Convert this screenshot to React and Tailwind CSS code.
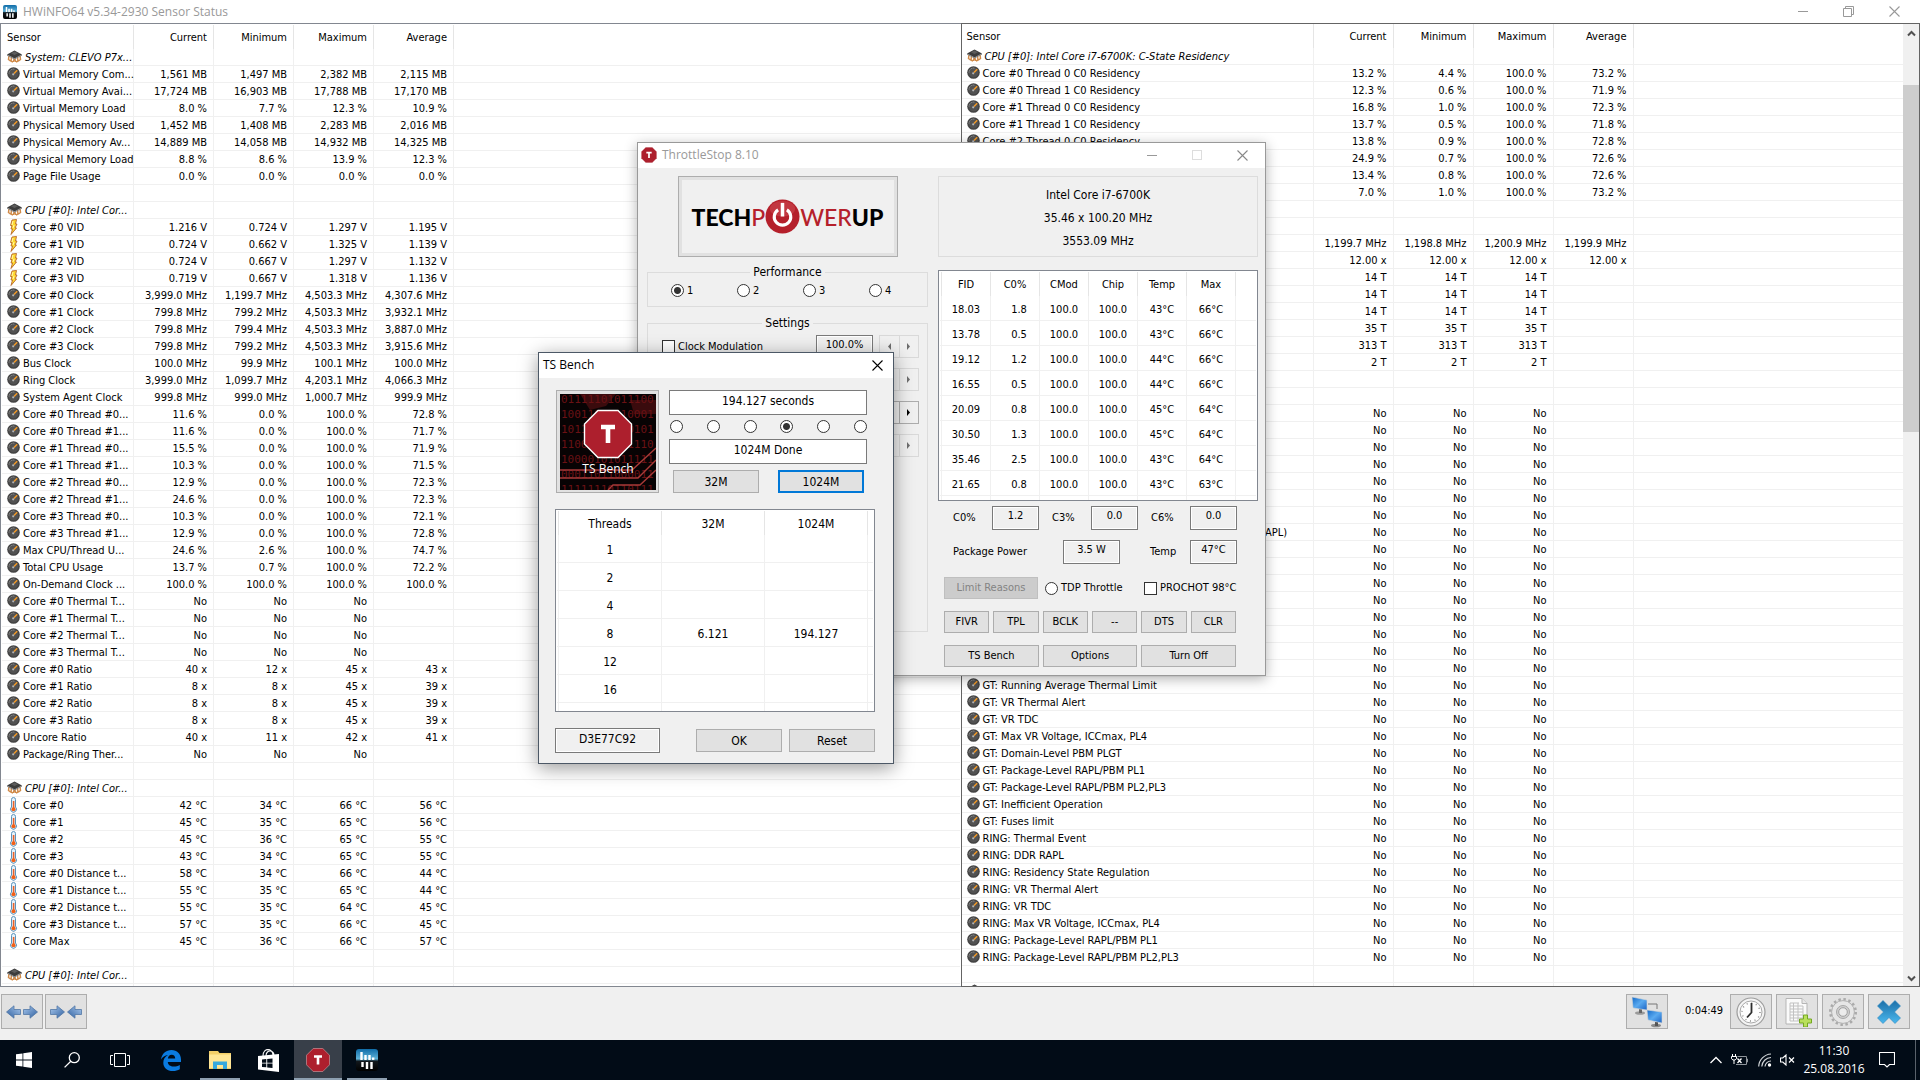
import { useState } from 'react';

const NO = ['No', 'No', 'No', ''];

// [icon, label, current, minimum, maximum, average]
const leftRows = [
  ['chip', 'System: CLEVO P7x...'],
  ['gauge', 'Virtual Memory Com...', '1,561 MB', '1,497 MB', '2,382 MB', '2,115 MB'],
  ['gauge', 'Virtual Memory Avai...', '17,724 MB', '16,903 MB', '17,788 MB', '17,170 MB'],
  ['gauge', 'Virtual Memory Load', '8.0 %', '7.7 %', '12.3 %', '10.9 %'],
  ['gauge', 'Physical Memory Used', '1,452 MB', '1,408 MB', '2,283 MB', '2,016 MB'],
  ['gauge', 'Physical Memory Av...', '14,889 MB', '14,058 MB', '14,932 MB', '14,325 MB'],
  ['gauge', 'Physical Memory Load', '8.8 %', '8.6 %', '13.9 %', '12.3 %'],
  ['gauge', 'Page File Usage', '0.0 %', '0.0 %', '0.0 %', '0.0 %'],
  [],
  ['chip', 'CPU [#0]: Intel Cor...'],
  ['bolt', 'Core #0 VID', '1.216 V', '0.724 V', '1.297 V', '1.195 V'],
  ['bolt', 'Core #1 VID', '0.724 V', '0.662 V', '1.325 V', '1.139 V'],
  ['bolt', 'Core #2 VID', '0.724 V', '0.667 V', '1.297 V', '1.132 V'],
  ['bolt', 'Core #3 VID', '0.719 V', '0.667 V', '1.318 V', '1.136 V'],
  ['gauge', 'Core #0 Clock', '3,999.0 MHz', '1,199.7 MHz', '4,503.3 MHz', '4,307.6 MHz'],
  ['gauge', 'Core #1 Clock', '799.8 MHz', '799.2 MHz', '4,503.3 MHz', '3,932.1 MHz'],
  ['gauge', 'Core #2 Clock', '799.8 MHz', '799.4 MHz', '4,503.3 MHz', '3,887.0 MHz'],
  ['gauge', 'Core #3 Clock', '799.8 MHz', '799.2 MHz', '4,503.3 MHz', '3,915.6 MHz'],
  ['gauge', 'Bus Clock', '100.0 MHz', '99.9 MHz', '100.1 MHz', '100.0 MHz'],
  ['gauge', 'Ring Clock', '3,999.0 MHz', '1,099.7 MHz', '4,203.1 MHz', '4,066.3 MHz'],
  ['gauge', 'System Agent Clock', '999.8 MHz', '999.0 MHz', '1,000.7 MHz', '999.9 MHz'],
  ['gauge', 'Core #0 Thread #0...', '11.6 %', '0.0 %', '100.0 %', '72.8 %'],
  ['gauge', 'Core #0 Thread #1...', '11.6 %', '0.0 %', '100.0 %', '71.7 %'],
  ['gauge', 'Core #1 Thread #0...', '15.5 %', '0.0 %', '100.0 %', '71.9 %'],
  ['gauge', 'Core #1 Thread #1...', '10.3 %', '0.0 %', '100.0 %', '71.5 %'],
  ['gauge', 'Core #2 Thread #0...', '12.9 %', '0.0 %', '100.0 %', '72.3 %'],
  ['gauge', 'Core #2 Thread #1...', '24.6 %', '0.0 %', '100.0 %', '72.3 %'],
  ['gauge', 'Core #3 Thread #0...', '10.3 %', '0.0 %', '100.0 %', '72.1 %'],
  ['gauge', 'Core #3 Thread #1...', '12.9 %', '0.0 %', '100.0 %', '72.8 %'],
  ['gauge', 'Max CPU/Thread U...', '24.6 %', '2.6 %', '100.0 %', '74.7 %'],
  ['gauge', 'Total CPU Usage', '13.7 %', '0.7 %', '100.0 %', '72.2 %'],
  ['gauge', 'On-Demand Clock ...', '100.0 %', '100.0 %', '100.0 %', '100.0 %'],
  ['gauge', 'Core #0 Thermal T...', ...NO],
  ['gauge', 'Core #1 Thermal T...', ...NO],
  ['gauge', 'Core #2 Thermal T...', ...NO],
  ['gauge', 'Core #3 Thermal T...', ...NO],
  ['gauge', 'Core #0 Ratio', '40 x', '12 x', '45 x', '43 x'],
  ['gauge', 'Core #1 Ratio', '8 x', '8 x', '45 x', '39 x'],
  ['gauge', 'Core #2 Ratio', '8 x', '8 x', '45 x', '39 x'],
  ['gauge', 'Core #3 Ratio', '8 x', '8 x', '45 x', '39 x'],
  ['gauge', 'Uncore Ratio', '40 x', '11 x', '42 x', '41 x'],
  ['gauge', 'Package/Ring Ther...', ...NO],
  [],
  ['chip', 'CPU [#0]: Intel Cor...'],
  ['temp', 'Core #0', '42 °C', '34 °C', '66 °C', '56 °C'],
  ['temp', 'Core #1', '45 °C', '35 °C', '65 °C', '56 °C'],
  ['temp', 'Core #2', '45 °C', '36 °C', '65 °C', '55 °C'],
  ['temp', 'Core #3', '43 °C', '34 °C', '65 °C', '55 °C'],
  ['temp', 'Core #0 Distance t...', '58 °C', '34 °C', '66 °C', '44 °C'],
  ['temp', 'Core #1 Distance t...', '55 °C', '35 °C', '65 °C', '44 °C'],
  ['temp', 'Core #2 Distance t...', '55 °C', '35 °C', '64 °C', '45 °C'],
  ['temp', 'Core #3 Distance t...', '57 °C', '35 °C', '66 °C', '45 °C'],
  ['temp', 'Core Max', '45 °C', '36 °C', '66 °C', '57 °C'],
  [],
  ['chip', 'CPU [#0]: Intel Cor...'],
  [],
];

const limitNames = [
  '', '', '', '', '', '', '',
  'IA: Electrical Design Point/Other(ICCmax,PL4,SVID,DDR RAPL)',
  '', '', '', '', '', '', '', '',
  'GT: Running Average Thermal Limit',
  'GT: VR Thermal Alert',
  'GT: VR TDC',
  'GT: Max VR Voltage, ICCmax, PL4',
  'GT: Domain-Level PBM PLGT',
  'GT: Package-Level RAPL/PBM PL1',
  'GT: Package-Level RAPL/PBM PL2,PL3',
  'GT: Inefficient Operation',
  'GT: Fuses limit',
  'RING: Thermal Event',
  'RING: DDR RAPL',
  'RING: Residency State Regulation',
  'RING: VR Thermal Alert',
  'RING: VR TDC',
  'RING: Max VR Voltage, ICCmax, PL4',
  'RING: Package-Level RAPL/PBM PL1',
  'RING: Package-Level RAPL/PBM PL2,PL3',
];

const rightRows = [
  ['chip', 'CPU [#0]: Intel Core i7-6700K: C-State Residency'],
  ['gauge', 'Core #0 Thread 0 C0 Residency', '13.2 %', '4.4 %', '100.0 %', '73.2 %'],
  ['gauge', 'Core #0 Thread 1 C0 Residency', '12.3 %', '0.6 %', '100.0 %', '71.9 %'],
  ['gauge', 'Core #1 Thread 0 C0 Residency', '16.8 %', '1.0 %', '100.0 %', '72.3 %'],
  ['gauge', 'Core #1 Thread 1 C0 Residency', '13.7 %', '0.5 %', '100.0 %', '71.8 %'],
  ['gauge', 'Core #2 Thread 0 C0 Residency', '13.8 %', '0.9 %', '100.0 %', '72.8 %'],
  ['', '', '24.9 %', '0.7 %', '100.0 %', '72.6 %'],
  ['', '', '13.4 %', '0.8 %', '100.0 %', '72.6 %'],
  ['', '', '7.0 %', '1.0 %', '100.0 %', '73.2 %'],
  [],
  [],
  ['', '', '1,199.7 MHz', '1,198.8 MHz', '1,200.9 MHz', '1,199.9 MHz'],
  ['', '', '12.00 x', '12.00 x', '12.00 x', '12.00 x'],
  ['', '', '14 T', '14 T', '14 T'],
  ['', '', '14 T', '14 T', '14 T'],
  ['', '', '14 T', '14 T', '14 T'],
  ['', '', '35 T', '35 T', '35 T'],
  ['', '', '313 T', '313 T', '313 T'],
  ['', '', '2 T', '2 T', '2 T'],
  [],
  [],
  ...limitNames.map((name) => [name ? 'gauge' : '', name, ...NO]),
  [],
  ['chip', ''],
];

const threadRows = [
  ['18.03', '1.8', '100.0', '100.0', '43°C', '66°C'],
  ['13.78', '0.5', '100.0', '100.0', '43°C', '66°C'],
  ['19.12', '1.2', '100.0', '100.0', '44°C', '66°C'],
  ['16.55', '0.5', '100.0', '100.0', '44°C', '66°C'],
  ['20.09', '0.8', '100.0', '100.0', '45°C', '64°C'],
  ['30.50', '1.3', '100.0', '100.0', '45°C', '64°C'],
  ['35.46', '2.5', '100.0', '100.0', '43°C', '64°C'],
  ['21.65', '0.8', '100.0', '100.0', '43°C', '63°C'],
];

const benchRows = [
  ['1', '', ''],
  ['2', '', ''],
  ['4', '', ''],
  ['8', '6.121', '194.127'],
  ['12', '', ''],
  ['16', '', ''],
];

const button = 'border border-[#adadad] bg-[#e1e1e1] text-center whitespace-nowrap';
const radio =
  'm-0 size-[13px] shrink-0 appearance-none rounded-full border border-[#333] bg-white checked:bg-[radial-gradient(circle,#333_3px,#fff_4px)]';
const checkbox = 'm-0 size-[13px] shrink-0 appearance-none border border-[#333] bg-white checked:bg-[#333]';

/* ---------- icons ---------- */

const GaugeIcon = () => (
  <svg viewBox="0 0 13 13" className="mt-px size-[13px] shrink-0">
    <circle cx="6.5" cy="6.5" r="6.3" fill="#444" />
    <circle cx="6.5" cy="6.5" r="4.8" fill="#525252" />
    <path d="M2 6.5A4.5 4.5 0 0 1 8 2.3" stroke="#a5a5a5" strokeWidth="1" strokeDasharray="1 1" fill="none" />
    <path d="M7 6.5L10.2 3.2" stroke="#f39a26" strokeWidth="1.5" />
    <circle cx="6.2" cy="7.3" r="1.1" fill="#b4b4b4" />
  </svg>
);

const ChipIcon = () => (
  <svg viewBox="0 0 15 13" className="mt-px h-[13px] w-[15px] shrink-0">
    <path
      d="M2 6l-.5 3.500L3.500 11M4.500 7L4 11l2 1M7 9l-.5 3M8 9l.5 3M10.500 7l.5 4-2 1M13 6l.5 3.500L11.500 11"
      stroke="#d08a48"
      strokeWidth="1.5"
      fill="none"
    />
    <path d="M7.5 .5L15 4.500 7.500 8.500 0 4.500z" fill="#3c3c3c" />
    <path d="M0 4.500L7.500 8.500 15 4.500v1L7.500 9.500 0 5.500z" fill="#777" />
    <path d="M7.5 1.5L11 3.300 7.500 5 4 3.300z" fill="#5c5c5c" />
  </svg>
);

const BoltIcon = () => (
  <svg viewBox="0 0 13 16" className="h-4 w-[13px] shrink-0">
    <path d="M5 1L9.5 .5 8.5 5H10L8 9h1.5L4 15.5 5.5 10H4L5 6.5H3.5z" fill="#ffd92e" stroke="#b4642a" strokeWidth=".9" />
    <path d="M6 2L5 6M7 6L6 9" stroke="#fff6b0" strokeWidth="1" />
  </svg>
);

const TempIcon = () => (
  <svg viewBox="0 0 13 16" className="h-4 w-[13px] shrink-0">
    <path d="M4.5 2.5a2 2 0 0 1 4 0V10a3 3 0 1 1-4 0z" fill="#e4f1fa" stroke="#5b93bb" strokeWidth="1" />
    <rect x="5.8" y="4" width="1.6" height="8" fill="#e8622a" />
    <circle cx="6.5" cy="12.3" r="2" fill="#f06018" />
  </svg>
);

const rowIcons = { gauge: GaugeIcon, chip: ChipIcon, bolt: BoltIcon, temp: TempIcon };

const HwinfoIcon = ({ className }) => (
  <svg viewBox="0 0 22 22" className={className}>
    <defs>
      <linearGradient id="hw" x1="0" y1="0" x2="0" y2="1">
        <stop offset="0" stopColor="#0f6ca8" />
        <stop offset=".45" stopColor="#5fb2d8" />
        <stop offset=".55" stopColor="#12181d" />
        <stop offset="1" stopColor="#000" />
      </linearGradient>
    </defs>
    <rect width="22" height="22" rx="3" fill="url(#hw)" />
    <path d="M5.500 3v8M9.500 6v5M13.500 6v5" stroke="#fff" strokeWidth="2.4" />
    <rect x="16" y="8.5" width="2.4" height="2.4" fill="#fff" />
    <path d="M6.5 13v5M11 13v7M15.5 13v7" stroke="#fff" strokeWidth="2.4" />
  </svg>
);

const StopIcon = ({ className }) => (
  <svg viewBox="0 0 24 24" className={className}>
    <path d="M7.2 .5h9.6l6.7 6.7v9.6l-6.7 6.7H7.2L.5 16.8V7.2z" fill="#ad1f2d" stroke="#d9a3a8" strokeWidth=".6" />
    <path d="M8 8.500h8M12 8.500V16.500" stroke="#fff" strokeWidth="2.600" />
  </svg>
);

const CloseGlyph = ({ className }) => (
  <svg viewBox="0 0 11 11" className={`size-[11px] ${className}`}>
    <path d="M.5 .5l10 10M10.5 .5l-10 10" stroke="currentColor" strokeWidth="1.1" />
  </svg>
);

const BlueArrow = ({ flip }) => (
  <svg viewBox="0 0 15 14" className={flip ? 'h-[14px] w-[15px] -scale-x-100' : 'h-[14px] w-[15px]'}>
    <defs>
      <linearGradient id="arrow" x1="0" y1="0" x2="1" y2="1">
        <stop offset="0" stopColor="#a9c9ee" />
        <stop offset="1" stopColor="#2f5f9f" />
      </linearGradient>
    </defs>
    <path d="M.5 4.5H7V.8L14.5 7 7 13.2V9.5H.5z" fill="url(#arrow)" stroke="#5277a6" strokeWidth=".8" />
  </svg>
);

const NetworkIcon = () => (
  <svg viewBox="0 0 32 32" className="size-8">
    <defs>
      <linearGradient id="screen" x1="0" y1="0" x2="1" y2="1">
        <stop offset="0" stopColor="#1469c7" />
        <stop offset=".5" stopColor="#5aaaf0" />
        <stop offset="1" stopColor="#1b63c4" />
      </linearGradient>
    </defs>
    <path d="M17 8h9v5" stroke="#777" fill="none" />
    <ellipse cx="9" cy="17" rx="5" ry="1.8" fill="#9a9a9a" />
    <path d="M8 13h3v4H8z" fill="#666" />
    <path d="M1 1l15 3v10L2 12z" fill="url(#screen)" stroke="#d5d5d5" strokeWidth=".6" />
    <ellipse cx="25" cy="29.5" rx="5" ry="1.8" fill="#8a8a8a" />
    <path d="M24 26h3v4h-3z" fill="#555" />
    <path d="M16 14l15 2v11l-14-3z" fill="url(#screen)" stroke="#d5d5d5" strokeWidth=".6" />
  </svg>
);

const ClockIcon = () => (
  <svg viewBox="0 0 30 30" className="size-[30px]">
    <circle cx="15" cy="15" r="14" fill="#f4f4f4" stroke="#9d9d9d" strokeWidth="1.2" />
    <circle cx="15" cy="15" r="11" fill="#fdfdfd" stroke="#a8a8a8" strokeWidth="1" />
    <circle cx="15" cy="15" r="9" fill="none" stroke="#888" strokeWidth="1.4" strokeDasharray="1 3.71" />
    <path d="M15.5 6v9.5L11 20.5" stroke="#2d2d2d" strokeWidth="1.8" fill="none" />
  </svg>
);

const ReportIcon = () => (
  <svg viewBox="0 0 30 30" className="size-[30px]">
    <path d="M4 1.5h16l5 5V27H4z" fill="#fafafa" stroke="#b5b5b5" />
    <path d="M20 1.5v5h5" fill="#e8e8e8" stroke="#b5b5b5" />
    <path d="M8 6h9M8 9h13M8 12h13M8 15h13M8 18h13M8 21h13M8 6v18M11.5 6v18M16 6v18M21 9v15M8 24h13" stroke="#c2c2c2" fill="none" />
    <path d="M21.5 18h4v4h4v4h-4v4h-4v-4h-4v-4h4z" fill="#b9e05c" stroke="#74a823" />
  </svg>
);

const GearIcon = () => (
  <svg viewBox="0 0 30 30" className="size-[30px]">
    <circle cx="15" cy="15" r="12.4" fill="none" stroke="#aaa" strokeWidth="3.2" strokeDasharray="2.4 2.47" />
    <circle cx="15" cy="15" r="11.4" fill="#e6e6e6" stroke="#b2b2b2" />
    <circle cx="15" cy="15" r="6.5" fill="#cfcfcf" stroke="#a9a9a9" />
    <circle cx="15" cy="15" r="4.3" fill="#ececec" stroke="#a0a0a0" />
  </svg>
);

const BigCrossIcon = () => (
  <svg viewBox="0 0 26 26" className="size-[26px]">
    <defs>
      <linearGradient id="cross" x1="0" y1="0" x2="0" y2="1">
        <stop offset="0" stopColor="#1c6fa8" />
        <stop offset="1" stopColor="#4bb8ee" />
      </linearGradient>
    </defs>
    <path
      d="M7 1.5L13 7.5l6-6L24.5 7l-6 6 6 6-5.5 5.5-6-6-6 6L1.5 19l6-6-6-6z"
      fill="url(#cross)"
      stroke="#2a86c0"
      strokeWidth=".6"
    />
  </svg>
);

/* ---------- sensor window ---------- */

const SensorTable = ({ rows, firstCol, label }) => (
  <table aria-label={label} className="w-full table-fixed border-separate border-spacing-0 whitespace-nowrap">
    <colgroup>
      <col className={firstCol} />
      <col className="w-[80px]" />
      <col className="w-[80px]" />
      <col className="w-[80px]" />
      <col className="w-[80px]" />
      <col />
    </colgroup>
    <thead>
      <tr className="h-6">
        <th className="border-r border-[#e5e5e5] p-0 pt-[2px] pl-[5px] text-left font-normal">Sensor</th>
        {['Current', 'Minimum', 'Maximum', 'Average'].map((name) => (
          <th key={name} className="border-r border-[#e5e5e5] p-0 pt-[2px] pr-[6px] text-right font-normal">
            {name}
          </th>
        ))}
        <th className="p-0" />
      </tr>
    </thead>
    <tbody>
      {rows.map(([icon, name, ...values], i) => {
        const Icon = rowIcons[icon];
        return (
          <tr key={i} className="h-[17px]">
            <td className="border-r border-b border-[#f0f0f0] p-0">
              <div className={`flex h-4 gap-[3px] pl-[5px] leading-[18px] ${icon === 'chip' ? 'italic' : ''}`}>
                {Icon && <Icon />}
                <span>{name}</span>
              </div>
            </td>
            {[0, 1, 2, 3].map((c) => (
              <td key={c} className="border-r border-b border-[#f0f0f0] p-0 pr-[6px] text-right">
                <div className="h-4 leading-[18px]">{values[c]}</div>
              </td>
            ))}
            <td className="border-b border-[#f0f0f0] p-0" />
          </tr>
        );
      })}
    </tbody>
  </table>
);

const toolButton = 'flex h-[35px] w-[42px] items-center justify-center border border-[#adadad] bg-[#e1e1e1]';

const SensorWindow = () => (
  <main className="flex min-h-0 flex-1 flex-col">
    <header className="flex h-[23px] shrink-0 items-center pl-[3px] font-['Open_Sans',sans-serif] text-xs text-[#999]">
      <HwinfoIcon className="size-[14px]" />
      <h1 className="pl-[6px]">HWiNFO64 v5.34-2930 Sensor Status</h1>
      <div className="ml-auto flex items-center gap-[35px] pr-5">
        <button aria-label="Minimize" className="h-px w-[10px] bg-[#999]" />
        <button aria-label="Restore">
          <svg viewBox="0 0 11 11" className="size-[11px]">
            <path d="M.5 2.5h8v8h-8zM2.5 2.5v-2h8v8h-2" fill="none" stroke="#999" />
          </svg>
        </button>
        <button aria-label="Close">
          <CloseGlyph className="text-[#999]" />
        </button>
      </div>
    </header>
    <div className="flex min-h-0 flex-1">
      <section className="min-w-0 flex-1 overflow-hidden border border-[#828790] p-px pb-0">
        <SensorTable rows={leftRows} firstCol="w-[132px]" label="System and CPU sensors" />
      </section>
      <section className="-ml-px flex min-w-0 flex-1 overflow-hidden border border-[#646464]">
        <div className="min-w-0 flex-1">
          <SensorTable rows={rightRows} firstCol="w-[352px]" label="C-state and limit sensors" />
        </div>
        <div className="flex w-4 flex-col items-center bg-[#f0f0f0] pt-[6px] pb-1">
          <svg viewBox="0 0 9 7" className="h-[7px] w-[9px]">
            <path d="M1 5.5L4.5 2 8 5.5" fill="none" stroke="#505050" strokeWidth="2" />
          </svg>
          <div className="mt-12 h-[347px] w-full bg-[#cdcdcd]" />
          <svg viewBox="0 0 9 7" className="mt-auto h-[7px] w-[9px]">
            <path d="M1 1.5L4.5 5 8 1.5" fill="none" stroke="#505050" strokeWidth="2" />
          </svg>
        </div>
      </section>
    </div>
    <footer className="flex h-[53px] shrink-0 items-start gap-1 bg-[#f0f0f0] pt-[7px] pr-[10px] pl-px">
      <div className="flex gap-[2px]">
        <button aria-label="Expand columns" className={`${toolButton} gap-[2px]`}>
          <BlueArrow flip />
          <BlueArrow />
        </button>
        <button aria-label="Shrink columns" className={`${toolButton} gap-[2px]`}>
          <BlueArrow />
          <BlueArrow flip />
        </button>
      </div>
      <button aria-label="Network" className={`${toolButton} ml-auto`}>
        <NetworkIcon />
      </button>
      <span className="w-[54px] pt-[9px] pl-[13px] leading-4 whitespace-nowrap">0:04:49</span>
      <button aria-label="Reset clock" className={toolButton}>
        <ClockIcon />
      </button>
      <button aria-label="Log to file" className={toolButton}>
        <ReportIcon />
      </button>
      <button aria-label="Settings" className={toolButton}>
        <GearIcon />
      </button>
      <button aria-label="Close sensors" className={toolButton}>
        <BigCrossIcon />
      </button>
    </footer>
  </main>
);

/* ---------- ThrottleStop window ---------- */

const Readout = ({ className, children }) => (
  <output className={`block border border-[#7a7a7a] pb-1 text-center shadow-[inset_0_0_0_1px_#fff] ${className}`}>
    {children}
  </output>
);

const Spinner = ({ dark }) => (
  <div className={`ml-[6px] flex h-[23px] w-10 border ${dark ? 'border-[#adadad]' : 'border-[#d9d9d9]'}`}>
    {['M4 0L1 3.5 4 7z', 'M1 0l3 3.5L1 7z'].map((d, i) => (
      <button
        key={d}
        aria-label={i ? 'Increase' : 'Decrease'}
        className={`flex flex-1 items-center justify-center ${i ? 'border-l border-inherit' : ''}`}
      >
        <svg viewBox="0 0 5 7" className="h-[7px] w-[5px]">
          <path d={d} fill={dark ? '#000' : '#6d6d6d'} />
        </svg>
      </button>
    ))}
  </div>
);

const PowerLogo = () => (
  <svg viewBox="0 0 36 36" className="size-[35px]">
    <circle cx="18" cy="18" r="17.5" fill="#b5202b" />
    <ellipse cx="18" cy="10" rx="13" ry="8" fill="#c8434b" opacity=".7" />
    <path d="M13.5 11.2a8.5 8.5 0 1 0 9 0" fill="none" stroke="#fff" strokeWidth="3.2" />
    <path d="M18 4v14" stroke="#fff" strokeWidth="3.6" />
  </svg>
);

const ThrottleStop = () => {
  const [profile, setProfile] = useState('1');

  return (
    <section className="absolute top-[142px] left-[637px] flex h-[534px] w-[629px] flex-col border border-[#999] bg-[#f0f0f0] shadow-[0_3px_12px_rgba(0,0,0,0.3)]">
      <header className="flex h-[25px] shrink-0 items-center bg-white pb-px pl-[3px] font-['Open_Sans',sans-serif] text-xs text-[#999]">
        <StopIcon className="size-4" />
        <h2 className="pl-[5px]">ThrottleStop 8.10</h2>
        <div className="ml-auto flex items-center gap-[35px] pr-[17px]">
          <button aria-label="Minimize" className="h-px w-[10px] bg-[#999]" />
          <button aria-label="Maximize" disabled className="size-[10px] border border-[#ddd]" />
          <button aria-label="Close">
            <CloseGlyph className="text-[#888]" />
          </button>
        </div>
      </header>

      <div className="flex flex-1 gap-[10px] pt-2 pr-[7px] pl-[9px]">
        <div className="w-[281px] shrink-0">
          <button
            aria-label="TechPowerUp"
            className="mx-auto flex h-[81px] w-[220px] items-center justify-center border border-[#adadad] font-['Lato',sans-serif] text-[23px] font-black text-black shadow-[inset_0_0_0_3px_#e1e1e1]"
          >
            TECH<span className="font-medium text-[#b5202b]">P</span>
            <PowerLogo />
            <span className="font-medium text-[#b5202b]">WER</span>UP
          </button>

          <fieldset className="mt-[7px] h-[43px] min-w-0 border border-[#dcdcdc]">
            <legend className="mx-auto px-[3px] text-xs leading-4">Performance</legend>
            <div className="flex gap-[41px] pt-1 pl-[23px]">
              {['1', '2', '3', '4'].map((n) => (
                <label key={n} className="flex w-[25px] items-center gap-[3px] leading-[13px]">
                  <input
                    type="radio"
                    name="profile"
                    className={radio}
                    checked={profile === n}
                    onChange={() => setProfile(n)}
                  />
                  {n}
                </label>
              ))}
            </div>
          </fieldset>

          <fieldset className="mt-2 h-[317px] min-w-0 border border-[#dcdcdc]">
            <legend className="mx-auto px-[3px] text-xs leading-4">Settings</legend>
            <div className="flex flex-col gap-[10px] pt-1 pr-[8px] pl-[14px]">
              <div className="flex h-[23px] items-center">
                <label className="flex items-center gap-[3px]">
                  <input type="checkbox" className={checkbox} />
                  Clock Modulation
                </label>
                <Readout className="ml-auto h-6 w-[57px] leading-[18px]">100.0%</Readout>
                <Spinner />
              </div>
              <div className="flex justify-end">
                <Spinner />
              </div>
              <div className="flex justify-end">
                <Spinner dark />
              </div>
              <div className="flex justify-end">
                <Spinner />
              </div>
            </div>
          </fieldset>
        </div>

        <div className="min-w-0 flex-1">
          <div className="flex h-[81px] flex-col items-center justify-center border border-[#dcdcdc] pt-[3px] text-xs leading-[23px]">
            <p>Intel Core i7-6700K</p>
            <p>35.46 x 100.20 MHz</p>
            <p>3553.09 MHz</p>
          </div>

          <div className="mt-[13px] h-[231px] overflow-hidden border border-[#828790] bg-white px-px pt-px">
            <table aria-label="Threads" className="w-full table-fixed border-separate border-spacing-0 text-center">
              <colgroup>
                <col className="w-[2px]" />
                {threadRows[0].map((_, i) => (
                  <col key={i} className="w-[49px]" />
                ))}
                <col />
              </colgroup>
              <thead>
                <tr className="h-6">
                  <th className="border-r border-[#e5e5e5] p-0" />
                  {['FID', 'C0%', 'CMod', 'Chip', 'Temp', 'Max'].map((name) => (
                    <th key={name} className="border-r border-[#e5e5e5] p-0 pt-[2px] font-normal">
                      {name}
                    </th>
                  ))}
                  <th className="p-0" />
                </tr>
              </thead>
              <tbody>
                {[...threadRows, ['', '', '', '', '', '']].map((cells, i) => (
                  <tr key={i} className="h-[25px]">
                    <td className="border-r border-b border-[#f0f0f0] p-0" />
                    {cells.map((cell, c) => (
                      <td key={c} className={`border-r border-b border-[#f0f0f0] p-0 pt-[3px] ${c === 1 ? 'pl-2' : ''}`}>
                        {cell}
                      </td>
                    ))}
                    <td className="border-b border-[#f0f0f0] p-0" />
                  </tr>
                ))}
              </tbody>
            </table>
          </div>

          <div className="mt-[5px] flex gap-[13px] pl-[15px] leading-[18px]">
            {[['C0%', '1.2'], ['C3%', '0.0'], ['C6%', '0.0']].map(([name, value]) => (
              <div key={name} className="flex items-center">
                <span className="w-[39px]">{name}</span>
                <Readout className="h-6 w-[47px]">{value}</Readout>
              </div>
            ))}
          </div>
          <div className="mt-[10px] flex items-center pl-[15px] leading-[18px]">
            <span className="w-[110px]">Package Power</span>
            <Readout className="h-6 w-[57px]">3.5 W</Readout>
            <span className="ml-[30px] w-10">Temp</span>
            <Readout className="h-6 w-[47px]">47°C</Readout>
          </div>

          <div className="mt-[13px] flex items-center pl-[6px] whitespace-nowrap">
            <button disabled className="h-[22px] w-[94px] border border-[#bfbfbf] bg-[#ccc] text-[#838383]">
              Limit Reasons
            </button>
            <label className="ml-[7px] flex w-[99px] items-center gap-[3px]">
              <input type="radio" name="tdp" className={radio} />
              TDP Throttle
            </label>
            <label className="flex items-center gap-[3px]">
              <input type="checkbox" className={checkbox} />
              PROCHOT 98°C
            </label>
          </div>

          <div className="mt-3 grid w-[298px] grid-cols-6 gap-x-[4px] gap-y-3 pl-[6px]">
            {['FIVR', 'TPL', 'BCLK', '--', 'DTS', 'CLR'].map((name) => (
              <button key={name} className={`${button} h-[22px]`}>
                {name}
              </button>
            ))}
            {['TS Bench', 'Options', 'Turn Off'].map((name) => (
              <button key={name} className={`${button} col-span-2 h-[22px]`}>
                {name}
              </button>
            ))}
          </div>
        </div>
      </div>
    </section>
  );
};

/* ---------- TS Bench dialog ---------- */

const bits = ['01111101011100', '10011001110001', '10111001010101', '11001101011110', '10000101011111', '00011011000011', '11111110110111'];

const BenchPicture = () => (
  <svg viewBox="0 0 96 96" className="size-24">
    <rect width="96" height="96" fill="#080304" />
    <path d="M20 0h36L46 12 30 16zM70 6h26v14H74z" fill="#3a0b0d" />
    {bits.map((line, i) => (
      <text key={i} x="1" y={9 + i * 15} fontFamily="DejaVu Sans Mono, monospace" fontSize="11" fill="#6a1114">
        {line}
      </text>
    ))}
    <path d="M0 76h72l24-22M0 84h78l18-18M48 96l5-5h27l16-15" fill="none" stroke="#a83a38" strokeWidth="1.4" />
    <path d="M38 16.5h20L71.500 30v20L58 63.500H38L24.500 50V30z" fill="#ad1f2d" stroke="#fff" strokeWidth="1.4" />
    <path d="M41 33h14M48 33v16" stroke="#fff" strokeWidth="4.6" />
    <text x="48" y="79" textAnchor="middle" fontFamily="Open Sans, sans-serif" fontSize="12" fill="#fff">
      TS Bench
    </text>
  </svg>
);

const TSBench = () => {
  const [step, setStep] = useState(3);

  return (
    <section
      role="dialog"
      aria-label="TS Bench"
      className="absolute top-[352px] left-[538px] flex h-[412px] w-[356px] flex-col border border-[#4c5866] bg-[#f0f0f0] text-xs shadow-[0_4px_18px_rgba(0,0,0,0.4)]"
    >
      <header className="flex h-[25px] shrink-0 items-center justify-between bg-white pr-[10px] pb-px pl-1 font-['Open_Sans',sans-serif]">
        <h2>TS Bench</h2>
        <button aria-label="Close">
          <CloseGlyph className="text-black" />
        </button>
      </header>

      <div className="flex flex-1 flex-col pt-3 pr-[18px] pl-4">
        <div className="flex gap-[10px] pl-px">
          <button aria-label="Bench picture" className="size-[103px] shrink-0 border border-[#adadad] bg-[#e1e1e1] p-[3px]">
            <BenchPicture />
          </button>
          <div className="flex w-[198px] flex-col">
            <Readout className="h-[25px] bg-white leading-5">194.127 seconds</Readout>
            <div className="flex justify-between pt-[5px] pb-[6px] pl-px">
              {[0, 1, 2, 3, 4, 5].map((n) => (
                <input
                  key={n}
                  type="radio"
                  name="step"
                  aria-label={`Step ${n + 1}`}
                  className={radio}
                  checked={step === n}
                  onChange={() => setStep(n)}
                />
              ))}
            </div>
            <Readout className="h-[25px] bg-white leading-5">1024M Done</Readout>
            <div className="flex justify-between pt-[6px] pr-[3px] pl-1">
              <button className={`${button} h-[23px] w-[86px]`}>32M</button>
              <button className="h-[23px] w-[86px] border-2 border-[#0078d7] bg-[#e1e1e1]">1024M</button>
            </div>
          </div>
        </div>

        <div className="mt-4 h-[203px] overflow-hidden border border-[#828790] bg-white px-px pt-px">
          <table aria-label="Bench results" className="w-full table-fixed border-separate border-spacing-0 text-center">
            <colgroup>
              <col className="w-[2px]" />
              <col className="w-[103px]" />
              <col className="w-[103px]" />
              <col className="w-[103px]" />
              <col />
            </colgroup>
            <thead>
              <tr className="h-6">
                <th className="border-r border-[#e5e5e5] p-0" />
                {['Threads', '32M', '1024M'].map((name) => (
                  <th key={name} className="border-r border-[#e5e5e5] p-0 pt-[2px] font-normal">
                    {name}
                  </th>
                ))}
                <th className="p-0" />
              </tr>
            </thead>
            <tbody>
              {[...benchRows, ['', '', '']].map((cells, i) => (
                <tr key={i} className="h-7">
                  <td className="border-r border-b border-[#f0f0f0] p-0" />
                  {cells.map((cell, c) => (
                    <td key={c} className="border-r border-b border-[#f0f0f0] p-0 pt-[3px]">
                      {cell}
                    </td>
                  ))}
                  <td className="border-b border-[#f0f0f0] p-0" />
                </tr>
              ))}
            </tbody>
          </table>
        </div>

        <div className="mt-4 flex items-center">
          <Readout className="h-[25px] w-[105px] leading-5">D3E77C92</Readout>
          <button className={`${button} ml-auto h-[23px] w-[86px]`}>OK</button>
          <button className={`${button} ml-[7px] h-[23px] w-[86px]`}>Reset</button>
        </div>
      </div>
    </section>
  );
};

/* ---------- taskbar ---------- */

const Taskbar = () => (
  <nav className="flex h-10 shrink-0 items-stretch bg-[#020c17] text-white">
    <button aria-label="Start" className="flex w-12 items-center justify-center">
      <svg viewBox="0 0 16 16" className="size-4">
        <path d="M0 2.300L6.500 1.400v6.200H0zM7.300 1.300L16 0v7.600H7.300zM0 8.400h6.500v6.200L0 13.700zM7.300 8.400H16V16l-8.700-1.300z" fill="#fff" />
      </svg>
    </button>
    <button aria-label="Search" className="flex w-12 items-center justify-center">
      <svg viewBox="0 0 16 16" className="size-4">
        <circle cx="10.300" cy="5.700" r="5" fill="none" stroke="#fff" strokeWidth="1.300" />
        <path d="M6.800 9.200L.6 15.400" stroke="#fff" strokeWidth="1.300" />
      </svg>
    </button>
    <button aria-label="Task view" className="flex w-12 items-center justify-center">
      <svg viewBox="0 0 20 14" className="h-[14px] w-5">
        <path d="M4.500 .5h11v13h-11zM3 2.500H.5v9H3M17 2.500h2.500v9H17" fill="none" stroke="#fff" />
      </svg>
    </button>
    <button aria-label="Edge" className="ml-[3px] flex w-[48px] items-center justify-center">
      <svg viewBox="0 0 20 21" className="h-[21px] w-5">
        <path
          d="M0 9.500C1 3.500 5 0 10.500 0 16 0 20 4 20 9.500v2.600H6.800c.2 3 2.700 4.500 5.700 4.500 2.400 0 4.400-.6 6.300-1.700v4.300C16.800 20.400 14.500 21 12 21 6 21 2.300 17.500 2.300 12.700c0-3.300 1.600-6 4.700-7.700C3.800 5.400 1.500 7 0 9.500zM6.900 8.600h7.300c0-2.300-1.300-3.800-3.500-3.800S7.200 6.200 6.900 8.600z"
          fill="#0a7be0"
        />
      </svg>
    </button>
    <button aria-label="File Explorer" className="ml-[5px] flex w-10 items-center justify-center border-b-2 border-[#8ea0b1] pt-[2px]">
      <svg viewBox="0 0 22 18" className="h-[18px] w-[22px]">
        <path d="M0 0h9l1.500 2H22v16H0z" fill="#f3cf68" />
        <path d="M0 3.500h22V17H0z" fill="#ffe695" />
        <path d="M4 18v-7.500h14V18h-4v-4H8v4z" fill="#37a9dd" />
      </svg>
    </button>
    <button aria-label="Store" className="ml-2 flex w-[46px] items-center justify-start pl-[10px]">
      <svg viewBox="0 0 21 23" className="h-[23px] w-[21px]">
        <path d="M0 7l21-2v18l-21-2.500z" fill="#fff" />
        <path d="M5 7C5 2 8 .6 10 .6S15 2 15 6.500M8 7c0-4 2.500-5 4-5s4 1 4 4" fill="none" stroke="#fff" strokeWidth="1.100" />
        <path d="M4 10.500l4.300-.4v3.700H4zM9.200 10l5.300-.5v4.300H9.200zM4 14.600h4.300v3.700L4 17.900zM9.200 14.600h5.300v4.300l-5.300-.5z" fill="#020c17" />
      </svg>
    </button>
    <button aria-label="ThrottleStop" className="flex w-12 items-center justify-center border-b-2 border-[#8ea0b1] bg-[#383f49] pt-[2px]">
      <StopIcon className="size-6" />
    </button>
    <button aria-label="HWiNFO64" className="ml-[5px] flex w-10 items-center justify-center border-b-2 border-[#8ea0b1] pt-[2px]">
      <HwinfoIcon className="size-[22px]" />
    </button>

    <div className="ml-auto flex items-center">
      <button aria-label="Show hidden icons">
        <svg viewBox="0 0 12 8" className="h-2 w-3">
          <path d="M.5 7L6 1.500 11.500 7" fill="none" stroke="#fff" strokeWidth="1.300" />
        </svg>
      </button>
      <svg viewBox="0 0 17 12" className="ml-[9px] h-3 w-[17px]">
        <path d="M6.500 2.500h9v8H5M15.500 5h1v3h-1" fill="none" stroke="#8f959b" />
        <path d="M1.500 0v2.500M4.500 0v2.500M.5 2.500h5v2.200L4 6H2L.5 4.700zM3 6v4" fill="none" stroke="#fff" />
        <path d="M6.500 4.500l4 4.500M10.500 4.500l-4 4.500" stroke="#fff" strokeWidth="1.300" />
      </svg>
      <svg viewBox="0 0 14 14" className="ml-[10px] size-[14px]">
        <path d="M.7 13.500A13 13 0 0 1 13 1M3.800 13.500A9.500 9.500 0 0 1 13 4.500M7 13.500A6 6 0 0 1 13 8" fill="none" stroke="#cfd3d6" strokeWidth="1.200" />
        <circle cx="11.500" cy="12" r="1.700" fill="#fff" />
      </svg>
      <svg viewBox="0 0 15 12" className="ml-2 h-3 w-[15px]">
        <path d="M.5 4h2.300L6 1v10L2.800 8H.5z" fill="none" stroke="#fff" strokeWidth="1.100" />
        <path d="M9 3.500l5 5M14 3.500l-5 5" stroke="#fff" strokeWidth="1.200" />
      </svg>
      <div className="w-[78px] text-center font-['Open_Sans',sans-serif] text-xs leading-[18px]">
        <p>11:30</p>
        <p>25.08.2016</p>
      </div>
      <button aria-label="Notifications" className="ml-[6px]">
        <svg viewBox="0 0 16 16" className="size-4">
          <path d="M.5 .5h15v12h-5L8 15l-2.500-2.500h-5z" fill="none" stroke="#fff" strokeWidth="1.100" />
        </svg>
      </button>
      <div className="mr-1 ml-5 h-10 w-px bg-[#5a626b]" />
    </div>
  </nav>
);

export default function App() {
  return (
    <div className="relative flex h-screen flex-col overflow-hidden bg-white font-['DejaVu_Sans_Condensed','Noto_Sans',sans-serif] text-[11px] leading-4 text-black">
      <SensorWindow />
      <Taskbar />
      <ThrottleStop />
      <TSBench />
    </div>
  );
}
